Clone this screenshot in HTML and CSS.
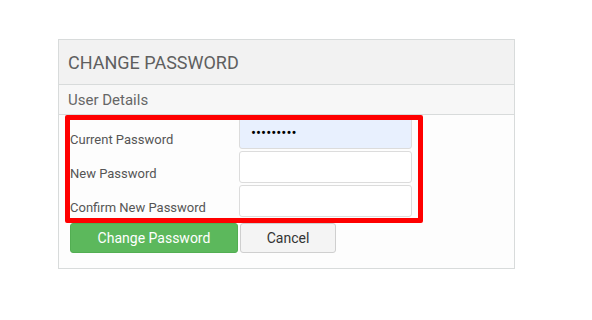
FILE: index.html
```html
<!DOCTYPE html>
<html>
<head>
<meta charset="utf-8">
<link rel="stylesheet" href="styles.css">
</head>
<body>
<div class="panel">
  <div class="panel-head">CHANGE PASSWORD</div>
  <div class="panel-sub">User Details</div>
  <div class="panel-body">
    <div class="fields">
      <div class="row">
        <label class="lbl">Current Password</label>
        <input class="inp filled" type="password" value="abcdefghi">
      </div>
      <div class="row">
        <label class="lbl">New Password</label>
        <input class="inp" type="password">
      </div>
      <div class="row">
        <label class="lbl">Confirm New Password</label>
        <input class="inp" type="password">
      </div>
      <div class="highlight"></div>
    </div>
    <div class="actions">
      <button class="btn btn-green">Change Password</button>
      <button class="btn btn-default">Cancel</button>
    </div>
  </div>
</div>
</body>
</html>
```
FILE: styles.css
```css
* { box-sizing: border-box; }
html, body { margin: 0; padding: 0; background: #fff; }
body {
  font-family: Roboto, "Liberation Sans", Arial, sans-serif;
  padding: 39px 0 0 58px;
}
.panel {
  width: 457px;
  height: 230px;
  border: 1px solid #d8dbdb;
  background: #fdfdfd;
}
.panel-head {
  height: 45px;
  border-bottom: 1px solid #d8dbdb;
  background: #f2f2f2;
  color: #5f5f5f;
  font-size: 18px;
  font-weight: 400;
  display: flex;
  align-items: center;
  padding-left: 9px;
  padding-top: 1px;
}
.panel-sub {
  height: 30px;
  border-bottom: 1px solid #d8dbdb;
  background: #f7f7f7;
  color: #666;
  font-size: 15px;
  display: flex;
  align-items: center;
  padding-left: 9px;
}
.panel-body {
  padding: 2px 0 0 11px;
}
.fields {
  position: relative;
  width: 342px;
  display: flex;
  flex-direction: column;
  gap: 2px;
}
.row {
  display: flex;
  height: 32px;
}
.lbl {
  width: 169px;
  flex: none;
  color: #555;
  font-size: 13px;
  padding-top: 14px;
  line-height: 18px;
}
.inp {
  width: 173px;
  height: 32px;
  margin: 0;
  border: 1px solid #dcdcdc;
  border-radius: 3px;
  background: #fff;
  padding: 0 11px;
  font-size: 15px;
  font-family: Roboto, "Liberation Sans", Arial, sans-serif;
  outline: none;
}
.inp.filled {
  background: #e8f0fe;
  color: #000;
}
.highlight {
  position: absolute;
  left: -5px;
  top: -2px;
  right: -11px;
  bottom: -6px;
  border: 5px solid #ff0000;
  border-radius: 2px;
  pointer-events: none;
}
.actions {
  display: flex;
  gap: 2px;
  margin-top: 6px;
}
.btn {
  height: 30px;
  font-family: Roboto, "Liberation Sans", Arial, sans-serif;
  font-size: 14px;
  border-radius: 3px;
  padding: 0;
  margin: 0;
}
.btn-green {
  width: 168px;
  background: #5cb85c;
  border: 1px solid #52ae52;
  color: #fff;
}
.btn-default {
  width: 96px;
  background: #f4f4f4;
  border: 1px solid #cfcfcf;
  color: #333;
}
```
